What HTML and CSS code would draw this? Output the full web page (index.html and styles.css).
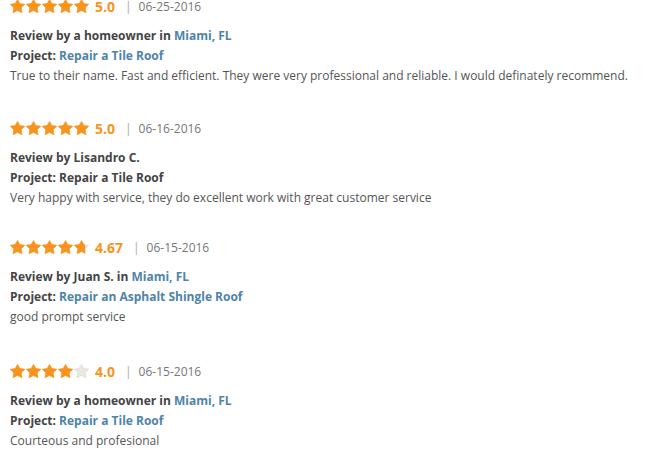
FILE: index.html
```html
<!DOCTYPE html>
<html lang="en">
<head>
<meta charset="utf-8">
<link rel="stylesheet" href="styles.css">
<title>Reviews</title>
</head>
<body>
<svg width="0" height="0" class="defs" aria-hidden="true">
  <defs>
    <path id="star" d="M7.5 0.4 L9.79 4.44 L14.73 5.25 L11.21 8.81 L11.97 13.75 L7.5 11.5 L3.03 13.75 L3.79 8.81 L0.27 5.25 L5.21 4.44 Z"/>
    <linearGradient id="part">
      <stop offset="72%" stop-color="#f7941d"/>
      <stop offset="72%" stop-color="#e6e3dc"/>
    </linearGradient>
  </defs>
</svg>
<div class="reviews">
  <div class="review">
    <div class="rating">
      <span class="stars">
        <svg viewBox="0 0 15 14"><use href="#star" class="full"/></svg>
        <svg viewBox="0 0 15 14"><use href="#star" class="full"/></svg>
        <svg viewBox="0 0 15 14"><use href="#star" class="full"/></svg>
        <svg viewBox="0 0 15 14"><use href="#star" class="full"/></svg>
        <svg viewBox="0 0 15 14"><use href="#star" class="full"/></svg>
      </span>
      <span class="score">5.0</span>
      <span class="sep">|</span>
      <span class="date">06-25-2016</span>
    </div>
    <div class="line strong">Review by a homeowner in <a href="#">Miami, FL</a></div>
    <div class="line strong">Project: <a href="#">Repair a Tile Roof</a></div>
    <div class="line text">True to their name. Fast and efficient. They were very professional and reliable. I would definately recommend.</div>
  </div>

  <div class="review">
    <div class="rating">
      <span class="stars">
        <svg viewBox="0 0 15 14"><use href="#star" class="full"/></svg>
        <svg viewBox="0 0 15 14"><use href="#star" class="full"/></svg>
        <svg viewBox="0 0 15 14"><use href="#star" class="full"/></svg>
        <svg viewBox="0 0 15 14"><use href="#star" class="full"/></svg>
        <svg viewBox="0 0 15 14"><use href="#star" class="full"/></svg>
      </span>
      <span class="score">5.0</span>
      <span class="sep">|</span>
      <span class="date">06-16-2016</span>
    </div>
    <div class="line strong">Review by Lisandro C.</div>
    <div class="line strong">Project: Repair a Tile Roof</div>
    <div class="line text">Very happy with service, they do excellent work with great customer service</div>
  </div>

  <div class="review review-loose">
    <div class="rating">
      <span class="stars">
        <svg viewBox="0 0 15 14"><use href="#star" class="full"/></svg>
        <svg viewBox="0 0 15 14"><use href="#star" class="full"/></svg>
        <svg viewBox="0 0 15 14"><use href="#star" class="full"/></svg>
        <svg viewBox="0 0 15 14"><use href="#star" class="full"/></svg>
        <svg viewBox="0 0 15 14"><use href="#star" class="partial"/></svg>
      </span>
      <span class="score">4.67</span>
      <span class="sep">|</span>
      <span class="date">06-15-2016</span>
    </div>
    <div class="line strong">Review by Juan S. in <a href="#">Miami, FL</a></div>
    <div class="line strong">Project: <a href="#">Repair an Asphalt Shingle Roof</a></div>
    <div class="line text">good prompt service</div>
  </div>

  <div class="review">
    <div class="rating">
      <span class="stars">
        <svg viewBox="0 0 15 14"><use href="#star" class="full"/></svg>
        <svg viewBox="0 0 15 14"><use href="#star" class="full"/></svg>
        <svg viewBox="0 0 15 14"><use href="#star" class="full"/></svg>
        <svg viewBox="0 0 15 14"><use href="#star" class="full"/></svg>
        <svg viewBox="0 0 15 14"><use href="#star" class="empty"/></svg>
      </span>
      <span class="score">4.0</span>
      <span class="sep">|</span>
      <span class="date">06-15-2016</span>
    </div>
    <div class="line strong">Review by a homeowner in <a href="#">Miami, FL</a></div>
    <div class="line strong">Project: <a href="#">Repair a Tile Roof</a></div>
    <div class="line text">Courteous and profesional</div>
  </div>
</div>
</body>
</html>
```

FILE: styles.css
```css
html, body {
  margin: 0;
  padding: 0;
  background: #ffffff;
}

body {
  font-family: "Open Sans", "Noto Sans", "Liberation Sans", sans-serif;
  font-size: 12px;
  color: #444444;
}

.defs {
  position: absolute;
  width: 0;
  height: 0;
}

.reviews {
  margin-top: -2px;
  padding-left: 10px;
  display: flex;
  flex-direction: column;
  gap: 34px;
}

.review-loose {
  margin-top: -3px;
}

.review-loose + .review {
  margin-top: 2px;
}

.rating {
  display: flex;
  align-items: center;
  height: 16px;
  margin-bottom: 12px;
}

.stars {
  display: flex;
  gap: 1px;
}

.stars svg {
  width: 15px;
  height: 14px;
  display: block;
  overflow: visible;
}

.full {
  fill: #f7941d;
  stroke: #f7941d;
  stroke-width: 0.7;
  stroke-linejoin: round;
}

.partial {
  fill: url(#part);
  stroke: url(#part);
  stroke-width: 0.7;
  stroke-linejoin: round;
}

.empty {
  fill: #ebe8e1;
  stroke: #d9d5cb;
  stroke-width: 0.6;
  stroke-linejoin: round;
}

.score {
  margin-left: 6px;
  font-size: 14px;
  font-weight: 700;
  color: #f7941d;
}

.sep {
  margin: 0 7px 0 10px;
  color: #aaaaaa;
  font-size: 12px;
}

.date {
  color: #777777;
  font-size: 12px;
}

.line {
  line-height: 20px;
}

.strong {
  font-weight: 700;
  color: #444444;
}

.strong a {
  color: #4f83a8;
  text-decoration: none;
}

.text {
  color: #555555;
}
```
